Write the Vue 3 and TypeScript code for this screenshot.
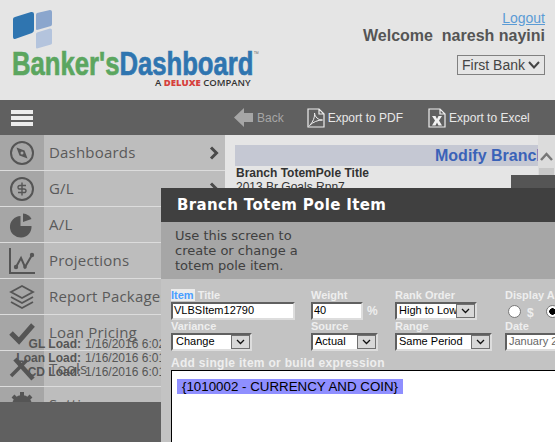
<template>
  <div class="page">
    <header class="top">
      <div class="brand">
        <svg class="brand-mark" width="42" height="40" viewBox="0 0 42 40">
          <path d="M3 9 Q3 7.500 5 7 L21 2 Q24 1.500 24 4 V20 Q24 22 22 23 L5 29 Q3 29.500 3 27 Z" fill="#2f75b0" />
          <path d="M26 4.500 Q26 3.500 27 3 L40 0 Q42 0 42 2 V14 Q42 15.500 41 16 L27 20 Q26 20 26 19 Z" fill="#8ba6cd" />
          <path d="M26 24 Q26 23 27 22.500 L40 18.500 Q42 18.500 42 20 V33 Q42 34 41 34.500 L27 38.500 Q26 38.500 26 37.500 Z" fill="#b4c4dd" />
        </svg>
        <div class="brand-name"><span class="green">Banker's</span><span class="blue">Dashboard</span><sup>™</sup></div>
        <div class="brand-sub">A <b>DELUXE</b> COMPANY</div>
      </div>
      <div class="user">
        <a class="logout">Logout</a>
        <div class="welcome">Welcome&nbsp; naresh nayini</div>
        <div class="bank">
          First Bank
          <svg width="12" height="8" viewBox="0 0 12 8"><path d="M1 1 L6 6.500 L11 1" fill="none" stroke="#444" stroke-width="2" /></svg>
        </div>
      </div>
    </header>

    <div class="toolbar">
      <div class="burger"><i></i><i></i><i></i></div>
      <div class="tool tool-back">
        <svg width="20" height="19" viewBox="0 0 20 19"><path d="M0 9.500 L10 0 V5 H19 V14 H10 V19 Z" fill="#a6a6a6" /></svg>
        Back
      </div>
      <div class="tool tool-pdf">
        <svg width="18" height="20" viewBox="0 0 18 20">
          <path d="M1 1 H12 L17 6 V19 H1 Z M12 1 V6 H17" fill="none" stroke="#eee" stroke-width="1.200" />
          <path d="M2.500 17.500 C6 14 8 9 7.500 5 C8 9 11 12 15.500 12 C11 12 6 14 2.500 17.500 Z" fill="none" stroke="#eee" />
        </svg>
        Export to PDF
      </div>
      <div class="tool tool-xls">
        <svg width="18" height="20" viewBox="0 0 18 20">
          <path d="M1 1 H12 L17 6 V19 H1 Z M12 1 V6 H17" fill="none" stroke="#eee" stroke-width="1.200" />
          <path d="M4 8 H7.500 L9 11 L10.500 8 H14 L11 12.500 L14 17.500 H10.500 L9 14.500 L7.500 17.500 H4 L7 12.500 Z" fill="#f2f2f2" />
        </svg>
        Export to Excel
      </div>
    </div>

    <div class="body">
      <nav class="side">
        <div v-for="item in navItems" :key="item.label" class="nav-row">
          <div class="nav-icon">
            <svg width="28" height="28" viewBox="0 0 28 28" v-html="item.icon"></svg>
          </div>
          <span class="nav-label">{{ item.label }}</span>
          <svg v-if="item.arrow" class="nav-arrow" width="10" height="14" viewBox="0 0 10 14">
            <path d="M2 1.500 L7.500 7 L2 12.500" fill="none" stroke="#4a4a4a" stroke-width="3" />
          </svg>
        </div>
        <div class="loads">
          <div v-for="l in loads" :key="l.name" class="load-row">
            <b>{{ l.name }} Load:</b>
            <span>{{ l.date }}</span>
          </div>
        </div>
        <div class="side-foot"></div>
      </nav>

      <main class="content">
        <div class="content-inner">
          <div class="content-title">Modify Branch TotemPole Item</div>
          <div class="content-name">Branch TotemPole Title</div>
          <div class="content-sub">2013 Br Goals Rpn7</div>
        </div>
        <div class="scrollbar">
          <svg width="13" height="9" viewBox="0 0 13 9"><path d="M1 8 L6.500 2 L12 8" fill="none" stroke="#777" stroke-width="2.500" /></svg>
          <div class="thumb"></div>
        </div>
        <div class="dark-corner"></div>
      </main>

      <section class="modal">
        <div class="modal-head">Branch Totem Pole Item</div>
        <p class="modal-note">Use this screen to<br />create or change a<br />totem pole item.</p>
        <div class="form">
          <div class="field">
            <label><span class="hl">Item</span> Title</label>
            <div class="input w-title">VLBSItem12790</div>
          </div>
          <div class="field">
            <label>Weight</label>
            <div class="with-unit"><div class="input w-weight">40</div><b>%</b></div>
          </div>
          <div class="field">
            <label>Rank Order</label>
            <div class="select w-rank">High to Low<span class="caret"><svg width="9" height="6" viewBox="0 0 9 6"><path d="M1 1 L4.500 4.500 L8 1" fill="none" stroke="#111" stroke-width="1.300" /></svg></span></div>
          </div>
          <div class="field">
            <label>Display As</label>
            <div class="radios">
              <i class="radio"></i><b>$</b>
              <i class="radio on"></i>
            </div>
          </div>
          <div class="field">
            <label>Variance</label>
            <div class="select w-var">Change<span class="caret"><svg width="9" height="6" viewBox="0 0 9 6"><path d="M1 1 L4.500 4.500 L8 1" fill="none" stroke="#111" stroke-width="1.300" /></svg></span></div>
          </div>
          <div class="field">
            <label>Source</label>
            <div class="select w-src">Actual<span class="caret"><svg width="9" height="6" viewBox="0 0 9 6"><path d="M1 1 L4.500 4.500 L8 1" fill="none" stroke="#111" stroke-width="1.300" /></svg></span></div>
          </div>
          <div class="field">
            <label>Range</label>
            <div class="select w-range">Same Period<span class="caret"><svg width="9" height="6" viewBox="0 0 9 6"><path d="M1 1 L4.500 4.500 L8 1" fill="none" stroke="#111" stroke-width="1.300" /></svg></span></div>
          </div>
          <div class="field">
            <label>Date</label>
            <div class="input w-date">January 2016</div>
          </div>
          <div class="expr-label">Add single item or build expression</div>
        </div>
        <div class="expr">
          <span class="token">{1010002 - CURRENCY AND COIN}</span>
        </div>
      </section>
    </div>
  </div>
</template>

<script setup lang="ts">
interface NavItem {
  label: string
  icon: string
  arrow?: boolean
}

const c = '#555'

const navItems: NavItem[] = [
  {
    label: 'Dashboards',
    arrow: true,
    icon: `<circle cx="14" cy="14" r="11" fill="none" stroke="${c}" stroke-width="2"/><path d="M8.500 8.500 L16.500 11.500 L19.500 19.500 L11.500 16.500 Z" fill="${c}"/><circle cx="14" cy="14" r="1.500" fill="#a6a6a6"/>`,
  },
  {
    label: 'G/L',
    arrow: true,
    icon: `<circle cx="14" cy="14" r="11" fill="none" stroke="${c}" stroke-width="2"/><path d="M18 10.500 H12 Q10 10.500 10 12.300 T12 14 H16 Q18 14 18 15.800 T16 17.500 H10 M14 7.500 V20.500" fill="none" stroke="${c}" stroke-width="1.400"/>`,
  },
  {
    label: 'A/L',
    icon: `<path d="M12.500 5 V15 H23.500 A10.800 10.800 0 1 1 12.500 5 Z" fill="${c}"/><path d="M15 2.500 Q21 3 23.500 8 L15 11 Z" fill="${c}"/>`,
  },
  {
    label: 'Projections',
    icon: `<path d="M2 1 V26 H27" fill="none" stroke="${c}" stroke-width="2"/><path d="M8 20 L13 11 L17 20 L24 8" fill="none" stroke="${c}" stroke-width="2"/><circle cx="8" cy="20" r="2.200" fill="${c}"/><circle cx="24" cy="8" r="2.200" fill="${c}"/><circle cx="17" cy="20" r="1.800" fill="${c}"/>`,
  },
  {
    label: 'Report Packages',
    icon: `<path d="M14 3 L25 9 L14 15 L3 9 Z" fill="none" stroke="${c}" stroke-width="1.800"/><path d="M3 14 L14 20 L25 14 M3 19 L14 25 L25 19" fill="none" stroke="${c}" stroke-width="1.800"/>`,
  },
  {
    label: 'Loan Pricing',
    icon: `<path d="M3 14 L11 22 L25 6" fill="none" stroke="${c}" stroke-width="5"/>`,
  },
  {
    label: 'Tools',
    icon: `<path d="M7 4 L25 24" fill="none" stroke="${c}" stroke-width="4.500"/><path d="M3 21 L19 5" fill="none" stroke="${c}" stroke-width="3.500"/>`,
  },
  {
    label: 'Settings',
    icon: `<circle cx="14" cy="14" r="7" fill="none" stroke="${c}" stroke-width="6"/><path d="M14 1 V27 M1 14 H27 M5 5 L23 23 M23 5 L5 23" stroke="${c}" stroke-width="4"/>`,
  },
]

const loads = [
  { name: 'GL', date: '1/16/2016 6:02 AM' },
  { name: 'Loan', date: '1/16/2016 6:01 AM' },
  { name: 'CD', date: '1/16/2016 6:01 AM' },
]
</script>

<style>
html,
body {
  margin: 0;
  background: #e5e5e5;
  overflow: hidden;
}
</style>

<style scoped>
.page {
  width: 555px;
  height: 442px;
  overflow: hidden;
  display: flex;
  flex-direction: column;
  font-family: 'Liberation Sans', Arial, sans-serif;
  background: #e5e5e5;
}

/* header */
.top {
  height: 100px;
  flex: none;
  display: flex;
  justify-content: space-between;
  padding: 10px 10px 0 12px;
  box-sizing: border-box;
}

.brand {
  width: 262px;
  display: flex;
  flex-direction: column;
}

.brand-mark {
  margin-left: -2px;
  display: block;
  flex: none;
}

/* no narrow face is installed, the wordmark is squeezed instead */
.brand-name {
  font-weight: 700;
  font-size: 34px;
  line-height: 30px;
  margin-top: -2px;
  white-space: nowrap;
  height: 28px;
  transform: scaleX(0.755);
  transform-origin: left center;
  -webkit-text-stroke: 0.7px currentColor;
}

.brand-name .green {
  color: #5ba65f;
}

.brand-name .blue {
  color: #2f75b0;
}

.brand-name sup {
  font-size: 7px;
  color: #777;
  vertical-align: top;
  line-height: 12px;
  font-weight: 400;
  -webkit-text-stroke: 0;
}

.brand-sub {
  margin: 1px 0 0 143px;
  font-family: 'Open Sans', sans-serif;
  font-size: 9.500px;
  line-height: 12px;
  font-weight: 600;
  color: #333;
  white-space: nowrap;
}

.brand-sub b {
  color: #d6403c;
  font-weight: 800;
}

.user {
  display: flex;
  flex-direction: column;
  align-items: flex-end;
}

.logout {
  color: #5b9bd5;
  font-size: 14px;
  line-height: 16px;
  text-decoration: underline;
}

.welcome {
  font-size: 16px;
  font-weight: 700;
  color: #555;
  line-height: 20px;
  white-space: nowrap;
}

.bank {
  margin-top: 9px;
  width: 88px;
  height: 20px;
  box-sizing: border-box;
  border: 1px solid #808080;
  display: flex;
  align-items: center;
  justify-content: space-between;
  padding: 0 4px;
  font-size: 14px;
  color: #444;
}

/* toolbar */
.toolbar {
  height: 35px;
  flex: none;
  background: #606060;
  display: flex;
  align-items: center;
  color: #e8e8e8;
  font-size: 12px;
}

.burger {
  margin-left: 11px;
  width: 22px;
  display: flex;
  flex-direction: column;
  gap: 2px;
}

.burger i {
  display: block;
  height: 4px;
  background: #ececec;
}

.tool {
  display: flex;
  align-items: center;
  gap: 3px;
}

.tool-back {
  margin-left: 201px;
  color: #a6a6a6;
}

.tool-pdf {
  margin-left: 23px;
}

.tool-xls {
  margin-left: 25px;
}

/* sidebar + content */
.body {
  flex: 1;
  position: relative;
  display: flex;
  min-height: 0;
}

.side {
  width: 225px;
  flex: none;
  background: #bdbdbd;
  position: relative;
  overflow: hidden;
}

.nav-row {
  height: 35px;
  border-bottom: 1px solid #dcdcdc;
  display: flex;
  align-items: center;
  position: relative;
}

.nav-icon {
  width: 44px;
  height: 100%;
  flex: none;
  background: #a6a6a6;
  display: flex;
  align-items: center;
  justify-content: center;
}

.nav-label {
  margin: -2px 0 0 5px;
  font-family: 'Open Sans', sans-serif;
  font-size: 15px;
  color: #5a5a5a;
  letter-spacing: 0.2px;
  white-space: nowrap;
}

.nav-arrow {
  position: absolute;
  right: 6px;
  top: 11px;
}

.loads {
  position: absolute;
  left: 0;
  top: 202px;
  width: 161px;
  overflow: hidden;
  color: #555;
  font-size: 12px;
}

.load-row {
  display: flex;
  height: 14px;
  line-height: 14px;
  white-space: nowrap;
}

.load-row b {
  width: 81px;
  flex: none;
  text-align: right;
  margin-right: 4px;
  white-space: nowrap;
}

.side-foot {
  position: absolute;
  left: 0;
  right: 0;
  top: 267px;
  bottom: 0;
  background: #606060;
}

.content {
  flex: 1;
  min-width: 0;
  display: flex;
  position: relative;
  overflow: hidden;
}

.content-inner {
  flex: 1;
  min-width: 0;
  padding: 10px 0 0 10px;
}

.content-title {
  height: 21px;
  line-height: 21px;
  padding-left: 200px;
  background: #c5c8d3;
  color: #3a62b8;
  font-size: 16px;
  font-weight: 700;
  white-space: nowrap;
  overflow: hidden;
}

.content-name {
  font-size: 12px;
  font-weight: 700;
  color: #333;
  margin-left: 1px;
  line-height: 14px;
}

.content-sub {
  font-size: 12px;
  color: #333;
  margin-left: 1px;
  line-height: 14px;
}

.scrollbar {
  width: 17px;
  flex: none;
  background: #dcdcdc;
  display: flex;
  flex-direction: column;
  align-items: center;
  padding-top: 17px;
  box-sizing: border-box;
}

.thumb {
  width: 15px;
  flex: 1;
  margin-top: 7px;
  background: #c8c8c8;
}

.dark-corner {
  position: absolute;
  right: 0;
  top: 40px;
  width: 44px;
  height: 20px;
  background: #555;
}

/* modal */
.modal {
  position: absolute;
  left: 161px;
  top: 53px;
  right: 0;
  bottom: 0;
  background: #c3c3c3;
  display: flex;
  flex-direction: column;
  overflow: hidden;
}

.modal-head {
  height: 34px;
  flex: none;
  background: #404040;
  color: #fff;
  font-family: 'DejaVu Sans', sans-serif;
  font-size: 15px;
  font-weight: 700;
  line-height: 35px;
  letter-spacing: 0.35px;
  padding-left: 16px;
  white-space: nowrap;
}

.modal-note {
  margin: 0;
  height: 57px;
  flex: none;
  box-sizing: border-box;
  background: #a6a6a6;
  color: #404040;
  font-family: 'DejaVu Sans', sans-serif;
  font-size: 13px;
  line-height: 15px;
  padding: 6px 0 0 14px;
}

.form {
  display: grid;
  grid-template-columns: 140px 84px 110px 100px;
  grid-template-rows: 31px 35px 14px;
  padding: 10px 0 0 10px;
  flex: none;
  height: 91px;
  box-sizing: border-box;
}

.field label {
  display: block;
  font-size: 11px;
  font-weight: 700;
  color: #eee;
  line-height: 13px;
  white-space: nowrap;
}

.hl {
  background: #ececec;
  color: #4a9eff;
  padding-right: 1px;
}

.input,
.select {
  height: 18px;
  box-sizing: border-box;
  border-style: solid;
  border-width: 2px;
  border-color: #606060 #ddd #ddd #606060;
  background: #fff;
  font-size: 11px;
  line-height: 13px;
  color: #000;
  padding-left: 1px;
  white-space: nowrap;
  overflow: hidden;
  position: relative;
}

.caret {
  position: absolute;
  right: 0;
  top: 0;
  bottom: 0;
  width: 19px;
  background: #d8d8d8;
  border: 1px solid #707070;
  box-sizing: border-box;
  display: flex;
  align-items: center;
  justify-content: center;
}

.w-title {
  width: 124px;
}

.w-weight {
  width: 52px;
}

.w-rank {
  width: 82px;
  padding-left: 2px;
}

.w-var {
  width: 81px;
  padding-left: 3px;
}

.w-src {
  width: 67px;
  padding-left: 2px;
}

.w-range {
  width: 97px;
  padding-left: 2px;
}

.w-date {
  width: 100px;
  padding-left: 2px;
  color: #666;
}

.with-unit {
  display: flex;
  align-items: center;
  gap: 4px;
  font-size: 12px;
  color: #eee;
}

.radios {
  display: flex;
  align-items: center;
  height: 18px;
  padding-left: 3px;
  font-size: 12px;
  color: #eee;
}

.radio {
  width: 13px;
  height: 13px;
  flex: none;
  box-sizing: border-box;
  border-radius: 50%;
  background: #fff;
  border: 1px solid #777;
  display: block;
}

.radios b {
  margin: 4px 12px 0 6px;
}

.radio.on {
  background: radial-gradient(circle, #000 0 3px, #fff 3.500px);
}

.expr-label {
  grid-column: 1 / -1;
  font-size: 12px;
  font-weight: 700;
  letter-spacing: 0.3px;
  color: #eee;
  line-height: 14px;
  padding-top: 1px;
  white-space: nowrap;
}

.expr {
  flex: 1;
  margin-left: 10px;
  background: #fff;
  border-top: 1px solid #000;
  border-left: 1px solid #000;
  padding: 6px 0 0 5px;
}

.token {
  display: inline-block;
  background: #8f8fff;
  font-size: 13.330px;
  line-height: 15px;
  padding: 0 5px;
  color: #000;
}
</style>
